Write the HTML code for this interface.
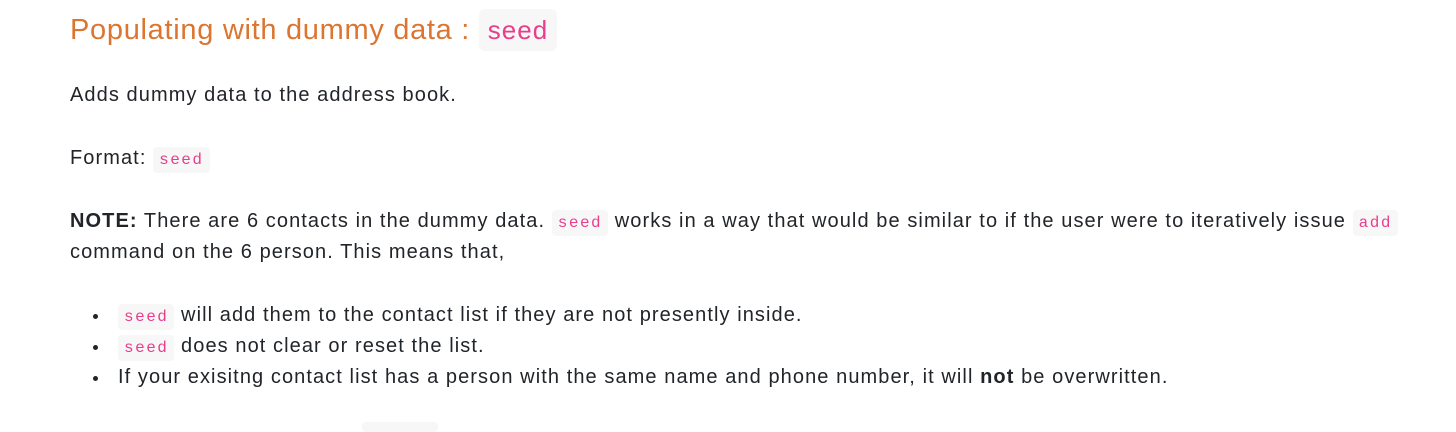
<!DOCTYPE html>
<html><head><style>
body{margin:0;width:1456px;height:426px;overflow:hidden;background:#fff;font-family:"Liberation Sans",sans-serif;color:#212529;font-size:20px;letter-spacing:1.08px;}
code{font-family:"Liberation Mono",monospace;color:#e83e8c;background:#f8f7f7;border-radius:4px;padding:4px 6px;font-size:16px;letter-spacing:1.5px;}
h2{position:absolute;left:70px;top:14px;margin:0;font-weight:normal;font-size:29px;letter-spacing:0.7px;color:#db7530;}
h2 code{font-family:"Liberation Sans",sans-serif;font-size:26px;padding:6px 9px;border-radius:6px;letter-spacing:1px;}
p{position:absolute;left:70px;margin:0;line-height:29px;width:1350px;}
ul{position:absolute;left:70px;top:300px;margin:0;padding-left:48px;line-height:31px;list-style:none;}
li{position:relative;height:31px;white-space:nowrap}
li:before{content:"";position:absolute;left:-25px;top:14px;width:5px;height:5px;border-radius:50%;background:#212529}
</style></head><body>
<h2>Populating with dummy data : <code>seed</code></h2>
<p style="top:81px">Adds dummy data to the address book.</p>
<p style="top:144px">Format: <code>seed</code></p>
<p style="top:207px"><b>NOTE:</b> There are 6 contacts in the dummy data. <code>seed</code> works in a way that would be similar to if the user were to iteratively issue <code>add</code> command on the 6 person. This means that,</p>
<ul>
<li><code>seed</code> will add them to the contact list if they are not presently inside.</li>
<li><code>seed</code> does not clear or reset the list.</li>
<li>If your exisitng contact list has a person with the same name and phone number, it will <b>not</b> be overwritten.</li>
</ul>
<div style="position:absolute;left:362px;top:422px;width:76px;height:10px;background:#f8f7f7;border-radius:4px"></div>
</body></html>
